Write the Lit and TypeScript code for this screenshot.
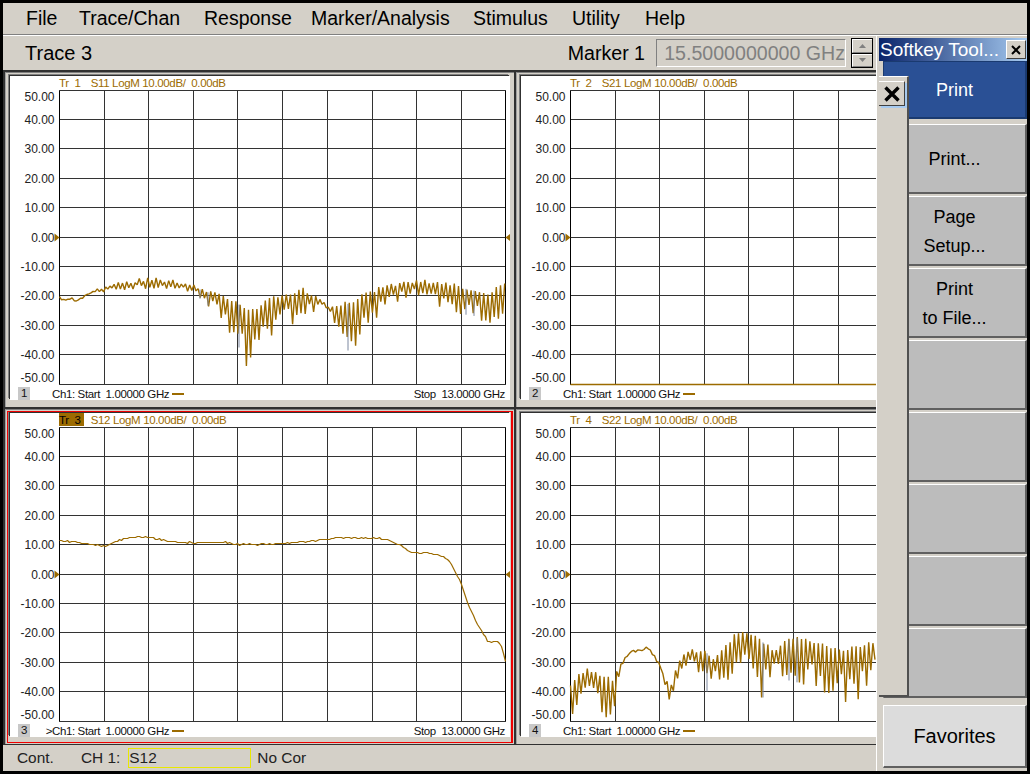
import { LitElement, css, html, svg } from "lit";
import { customElement, property } from "lit/decorators.js";

type Pt = [number, number];

const GRID_X = [0, 45, 89, 134, 178, 223, 268, 313, 357, 402, 446];
const GRID_Y = [0, 29, 58, 88, 117, 147, 176, 205, 235, 264, 294];
const Y_LABELS: [string, number][] = [
  ["50.00", 10],
  ["40.00", 33],
  ["30.00", 62],
  ["20.00", 92],
  ["10.00", 121],
  ["0.00", 151],
  ["-10.00", 180],
  ["-20.00", 209],
  ["-30.00", 239],
  ["-40.00", 268],
  ["-50.00", 291],
];

// label and the pitch to the next menu item
const MENU: [string, number][] = [
  ["File", 53],
  ["Trace/Chan", 125],
  ["Response", 107],
  ["Marker/Analysis", 162],
  ["Stimulus", 99],
  ["Utility", 73],
  ["Help", 60],
];

// envelopes are in page pixels, read off the screenshot
const S11_UP: Pt[] = [[59, 296], [75, 297], [90, 289], [110, 283], [148, 276], [170, 279], [193, 284], [225, 295], [240, 302], [250, 309], [268, 298], [282, 292], [303, 287], [323, 301], [328, 303], [350, 300], [367, 290], [393, 282], [417, 278], [450, 282], [477, 288], [490, 292], [498, 284], [505, 280]];
const S11_LOW: Pt[] = [[59, 299], [75, 301], [90, 294], [110, 290], [148, 288], [180, 288], [193, 293], [215, 312], [236, 342], [246, 367], [255, 345], [270, 336], [280, 326], [300, 322], [320, 306], [330, 312], [345, 350], [352, 350], [370, 322], [395, 302], [417, 294], [450, 312], [477, 316], [490, 329], [498, 329], [505, 302]];
const S22_UP: Pt[] = [[569, 685], [577, 672], [585, 667], [597, 671], [610, 678], [615, 670], [627, 650], [637, 647], [647, 645], [658, 662], [663, 675], [670, 682], [677, 660], [687, 648], [703, 648], [713, 657], [725, 642], [733, 633], [747, 629], [760, 638], [773, 650], [783, 638], [797, 634], [813, 640], [830, 645], [847, 647], [863, 642], [875, 639]];
const S22_LOW: Pt[] = [[569, 710], [575, 720], [580, 700], [592, 687], [600, 720], [610, 720], [615, 697], [620, 670], [627, 653], [647, 649], [658, 665], [663, 683], [667, 707], [672, 700], [677, 673], [687, 667], [700, 673], [703, 685], [707, 697], [713, 673], [725, 687], [737, 663], [747, 660], [760, 697], [763, 697], [773, 670], [787, 680], [800, 683], [817, 690], [833, 695], [842, 700], [852, 707], [863, 690], [875, 663]];
const S12: Pt[] = [[59, 541], [72, 541], [85, 543], [105, 546], [118, 540], [130, 537], [150, 537], [175, 542], [225, 542], [240, 544], [265, 544], [300, 542], [340, 537], [380, 538], [392, 541], [400, 545], [410, 552], [420, 553], [425, 552], [443, 556], [450, 562], [460, 582], [468, 605], [478, 625], [488, 642], [497, 641], [502, 648], [505, 662]];

function lerp(pts: Pt[], x: number) {
  for (let i = 1; i < pts.length; i++) {
    if (x <= pts[i][0]) {
      const [x0, y0] = pts[i - 1];
      const [x1, y1] = pts[i];
      return y0 + ((y1 - y0) * (x - x0)) / (x1 - x0);
    }
  }
  return pts[pts.length - 1][1];
}

function random(seed: number) {
  let s = seed;
  return () => {
    s = (s * 16807) % 2147483647;
    return s / 2147483647;
  };
}

// zig-zag between the two envelopes, period about 4.2px so white stays between the teeth
function ripple(up: Pt[], low: Pt[], ox: number, oy: number, seed: number) {
  const rnd = random(seed);
  const start = up[0][0];
  const end = up[up.length - 1][0];
  const out: string[] = [];
  let i = 0;
  for (let x = start; x <= end; x += 2.1, i++) {
    const u = lerp(up, x);
    const l = lerp(low, x);
    let y = u + rnd() * 4;
    if (i % 2) y = u + (l - u) * (i % 10 === 1 ? 1 : 0.5 + 0.5 * rnd());
    out.push(`${(x - ox).toFixed(1)},${Math.min(y - oy, 294).toFixed(1)}`);
  }
  return out.join(" ");
}

// the grey-blue memory trace only shows through in a few places
function memoryTicks(up: Pt[], low: Pt[], xs: number[], ox: number, oy: number) {
  return xs
    .map((x) => `M${x - ox + 0.5} ${lerp(up, x) - oy + 3}V${Math.min(lerp(low, x) - oy, 294)}`)
    .join("");
}

// thin stair-stepped line for the through trace
function stepped(pts: Pt[], ox: number, oy: number, seed: number) {
  const rnd = random(seed);
  const out: string[] = [];
  for (let x = pts[0][0]; x <= pts[pts.length - 1][0]; x += 2) {
    const y = Math.round(lerp(pts, x) + (rnd() - 0.5) * 1.4);
    out.push(`${x - ox},${y - oy}`);
  }
  return out.join(" ");
}

@customElement("trace-pane")
export class TracePane extends LitElement {
  @property() tr = "";
  @property() head = "";
  @property() index = "";
  @property() trace = "";
  @property() memory = "";
  @property({ type: Boolean, reflect: true }) active = false;
  @property({ type: Boolean }) stop = false;
  @property({ type: Number }) thick = 1.4;

  static styles = css`
    :host {
      display: block;
      position: relative;
      min-width: 0;
      overflow: hidden;
      background: #d4d0c8;
      border-top: 1px solid #808080;
      border-left: 1px solid #a0a0a0;
      font-family: "Liberation Sans", sans-serif;
    }
    :host([active])::after {
      content: "";
      position: absolute;
      inset: 1px 1px 1px 1px;
      border: 1px solid #f00000;
      border-right-width: 2px;
      pointer-events: none;
    }
    .frame {
      width: 500px;
      height: 324px;
      margin: 3px 0 0 4px;
      background: #fff;
      box-shadow: -1px -1px 0 #303030, -2px -2px 0 #808080;
    }
    .head {
      display: flex;
      height: 14px;
      padding-left: 49px;
      color: #9c6b00;
      font-size: 11.5px;
      letter-spacing: -0.35px;
      line-height: 14px;
      white-space: pre;
    }
    .tr {
      width: 26px;
    }
    .active-tr {
      width: 25px;
      height: 13px;
      margin-right: 1px;
      background: #9c6b00;
      color: #000;
    }
    svg {
      display: block;
    }
    .axis {
      fill: #222;
      font-size: 12px;
      text-anchor: end;
    }
    .foot {
      display: flex;
      align-items: center;
      height: 15px;
      padding-right: 5px;
      color: #111;
      font-size: 11.5px;
      letter-spacing: -0.38px;
      white-space: pre;
    }
    .num {
      width: 12px;
      height: 13px;
      margin-left: 8px;
      background: #c8c8c8;
      text-align: center;
      line-height: 13px;
    }
    .caret {
      width: 22px;
      text-align: right;
    }
    .dash {
      width: 12px;
      height: 2px;
      margin-left: 3px;
      background: #9c6b00;
    }
    .stop {
      margin-left: auto;
    }
  `;

  private plot() {
    const grid = [
      ...GRID_X.map((x) => svg`<line x1=${x} x2=${x} y1="0" y2="294" stroke="#333"></line>`),
      ...GRID_Y.map((y) => svg`<line x1="0" x2="446" y1=${y} y2=${y} stroke="#333"></line>`),
    ];
    return html`<svg width="500" height="296" viewBox="-49.5 -0.5 500 296">
      ${Y_LABELS.map(([t, y]) => svg`<text class="axis" x="-5" y=${y}>${t}</text>`)}
      ${grid}
      <line x1="0" x2="0" y1="0" y2="294" stroke="#000"></line>
      <line x1="446" x2="446" y1="0" y2="294" stroke="#000"></line>
      <polygon points="-5,143 -5,151 0,147" fill="#9c6b00"></polygon>
      <polygon points="451,143 451,151 446,147" fill="#9c6b00"></polygon>
      <polyline
        points=${this.trace}
        fill="none"
        stroke="#9c6b00"
        stroke-width=${this.thick}
        stroke-linejoin="bevel"
      ></polyline>
      ${this.memory ? svg`<path d=${this.memory} fill="none" stroke="#7c88a0" stroke-width="1"></path>` : ""}
    </svg>`;
  }

  render() {
    return html`<div class="frame">
      <div class="head">
        <span class=${this.active ? "active-tr" : "tr"}>${this.tr}</span><span>${this.head}</span>
      </div>
      ${this.plot()}
      <div class="foot">
        <span class="num">${this.index}</span>
        <span class="caret">${this.active ? ">" : ""}</span>
        <span>Ch1: Start  1.00000 GHz</span>
        <span class="dash"></span>
        ${this.stop ? html`<span class="stop">Stop  13.0000 GHz</span>` : ""}
      </div>
    </div>`;
  }
}

@customElement("app-root")
export class AppRoot extends LitElement {
  static styles = css`
    :host {
      display: block;
      width: 1030px;
      height: 774px;
      overflow: hidden;
      background: #000;
      font-family: "Liberation Sans", sans-serif;
    }
    .screen {
      display: flex;
      flex-direction: column;
      width: 1024px;
      height: 768px;
      margin: 3px 3px 0;
      background: #d4d0c8;
    }
    .menu {
      display: flex;
      align-items: center;
      height: 31px;
      padding-left: 23px;
      border-bottom: 1px solid #808080;
      font-size: 19.5px;
      color: #000;
    }
    .body {
      position: relative;
      display: flex;
      flex: 1;
      min-height: 0;
    }
    .left {
      display: flex;
      flex-direction: column;
      width: 873px;
    }
    .tracebar {
      display: flex;
      align-items: center;
      height: 35px;
      padding: 0 3px 0 22px;
      box-sizing: border-box;
      border-top: 1px solid #fff;
      font-size: 20px;
    }
    .marker {
      margin-left: auto;
      margin-right: 11px;
      font-size: 19.6px;
    }
    .value {
      width: 190px;
      height: 28px;
      box-sizing: border-box;
      border: 1px solid #808080;
      border-right-color: #fff;
      border-bottom-color: #fff;
      color: #808080;
      font-size: 19.6px;
      line-height: 26px;
      text-align: right;
      white-space: nowrap;
    }
    .spin {
      display: flex;
      flex-direction: column;
      gap: 1px;
      width: 22px;
      height: 30px;
      box-sizing: border-box;
      margin-left: 5px;
      border: 1px solid #000;
      background: #000;
    }
    .spin span {
      flex: 1;
      display: flex;
      align-items: center;
      justify-content: center;
      background: #d4d0c8;
      border-top: 1px solid #fff;
      border-left: 1px solid #fff;
      border-bottom: 1px solid #808080;
    }
    .panes {
      display: grid;
      grid-template-columns: 509px 360px;
      grid-template-rows: 335px 335px;
      gap: 2px;
      height: 675px;
      box-sizing: border-box;
      padding: 2px 0 0 2px;
      background: #303030;
    }
    .status {
      display: flex;
      align-items: center;
      height: 26px;
      padding-left: 14px;
      font-size: 15.4px;
      color: #222;
    }
    .cont {
      width: 64px;
    }
    .s12 {
      width: 121px;
      height: 18px;
      margin-left: 8px;
      margin-right: 6px;
      border: 1px solid #e8e800;
      line-height: 18px;
    }
    .soft {
      display: flex;
      flex-direction: column;
      width: 150px;
      padding-top: 2px;
      border-top: 1px solid #fff;
      border-left: 1px solid #fff;
    }
    .title {
      display: flex;
      align-items: center;
      height: 23px;
      margin-left: 2px;
      padding-left: 1px;
      background: linear-gradient(90deg, #0a246a, #a6caf0);
      color: #fff;
      font-size: 19px;
      white-space: nowrap;
    }
    .close {
      display: flex;
      align-items: center;
      justify-content: center;
      width: 20px;
      height: 19px;
      margin-left: auto;
      margin-right: 1px;
      box-sizing: border-box;
      background: #d4d0c8;
      border: 1px solid #fff;
      border-right-color: #404040;
      border-bottom-color: #404040;
    }
    .keys {
      display: flex;
      flex-direction: column;
      margin-left: 6px;
    }
    .key {
      display: flex;
      flex-direction: column;
      align-items: center;
      justify-content: center;
      height: 70px;
      margin-bottom: 2px;
      padding-top: 2px;
      box-sizing: border-box;
      background: #bcbcbc;
      border: 2px solid #606060;
      border-top: 1px solid #fff;
      border-left: 1px solid #fff;
      color: #000;
      font-size: 18px;
      line-height: 29px;
    }
    .key.print {
      height: 58px;
      margin-bottom: 5px;
      background: #2a5095;
      border-color: #1a3a70;
      color: #fff;
    }
    .key.fav {
      height: 63px;
      margin: 5px 0 0;
      padding-top: 0;
      background: #dcdcdc;
      font-size: 20px;
    }
    .xpanel {
      position: absolute;
      left: 876px;
      top: 41px;
      width: 30px;
      height: 621px;
      box-sizing: border-box;
      background: #d4d0c8;
      border-top: 1px solid #fff;
      border-right: 2px solid #505050;
      border-bottom: 2px solid #505050;
      padding-top: 4px;
    }
    .xbtn {
      display: flex;
      align-items: center;
      justify-content: center;
      width: 26px;
      height: 25px;
      box-sizing: border-box;
      background: #d4d0c8;
      border-top: 1px solid #fff;
      border-right: 1px solid #404040;
      border-bottom: 1px solid #404040;
      box-shadow: 2px 2px 0 #a6caf0;
    }
  `;

  render() {
    const s11 = ripple(S11_UP, S11_LOW, 59, 90, 4711);
    const s11mem = memoryTicks(S11_UP, S11_LOW, [199, 207, 238, 347, 465, 473], 59, 90);
    const s22 = ripple(S22_UP, S22_LOW, 569, 427, 911);
    const s22mem = memoryTicks(S22_UP, S22_LOW, [705, 761, 787, 795], 569, 427);
    const s12 = stepped(S12, 59, 427, 77);
    const s21 = "0,294 320,294";
    return html`<div class="screen">
      <div class="menu">
        ${MENU.map(([m, w]) => html`<span style="width:${w}px">${m}</span>`)}
      </div>
      <div class="body">
        <div class="left">
          <div class="tracebar">
            <span>Trace 3</span>
            <span class="marker">Marker 1</span>
            <div class="value">15.5000000000 GHz</div>
            <div class="spin">
              <span><svg width="7" height="4"><polygon points="3.5,0 7,4 0,4" fill="#808080"></polygon></svg></span>
              <span><svg width="7" height="4"><polygon points="0,0 7,0 3.5,4" fill="#808080"></polygon></svg></span>
            </div>
          </div>
          <div class="panes">
            <trace-pane tr="Tr  1" head="  S11 LogM 10.00dB/  0.00dB" index="1" .trace=${s11} .memory=${s11mem} stop></trace-pane>
            <trace-pane tr="Tr  2" head="  S21 LogM 10.00dB/  0.00dB" index="2" .trace=${s21}></trace-pane>
            <trace-pane tr="Tr  3" head="  S12 LogM 10.00dB/  0.00dB" index="3" .trace=${s12} .thick=${1.2} active stop></trace-pane>
            <trace-pane tr="Tr  4" head="  S22 LogM 10.00dB/  0.00dB" index="4" .trace=${s22} .memory=${s22mem}></trace-pane>
          </div>
          <div class="status">
            <span class="cont">Cont.</span>
            <span>CH 1:</span>
            <span class="s12">S12</span>
            <span>No Cor</span>
          </div>
        </div>
        <div class="soft">
          <div class="title">
            Softkey Tool...
            <div class="close">
              <svg width="10" height="10" viewBox="0 0 10 10"><path d="M1 1 9 9M9 1 1 9" stroke="#000" stroke-width="2"></path></svg>
            </div>
          </div>
          <div class="keys">
            <div class="key print">Print</div>
            <div class="key">Print...</div>
            <div class="key"><span>Page</span><span>Setup...</span></div>
            <div class="key"><span>Print</span><span>to File...</span></div>
            <div class="key"></div>
            <div class="key"></div>
            <div class="key"></div>
            <div class="key"></div>
            <div class="key"></div>
            <div class="key fav">Favorites</div>
          </div>
        </div>
        <div class="xpanel">
          <div class="xbtn">
            <svg width="16" height="16" viewBox="0 0 16 16"><path d="M1.5 1.5 14.5 14.5M14.5 1.5 1.5 14.5" stroke="#000" stroke-width="3.4"></path></svg>
          </div>
        </div>
      </div>
    </div>`;
  }
}
